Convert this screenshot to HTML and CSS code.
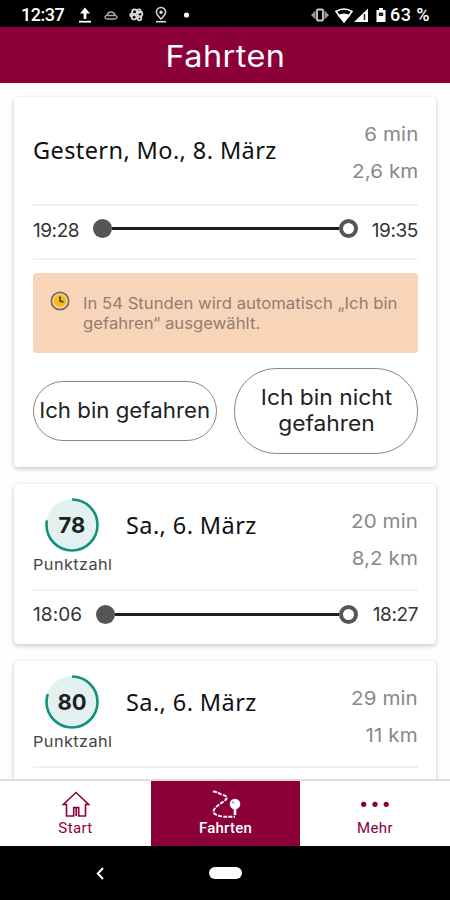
FILE: index.html
```html
<!DOCTYPE html>
<html lang="de">
<head>
<meta charset="utf-8">
<title>Fahrten</title>
<link rel="stylesheet" href="styles.css">
</head>
<body>
<div class="phone">
  <div class="status">
    <span class="clock">12:37</span>
    <svg class="status-left" width="118" height="20" viewBox="0 0 118 20" fill="none" stroke="#fff">
      <path d="M9 15V7" stroke-width="2.800"/><path d="M4 9.500 9 3.500l5 6z" fill="#fff" stroke="none"/><path d="M3 17.700h12" stroke-width="1.800"/>
      <path d="M29 12.500q0 2.500 3 2.500h6q3 0 3-2.500l-2-1.500q-1-3-4-3t-4 3zM31 11.500h8" stroke="#aaa" stroke-width="1.300"/>
      <g stroke="#ddd" stroke-width="1.700"><circle cx="58.500" cy="7.800" r="2.400"/><circle cx="64" cy="10" r="2.400"/><circle cx="58" cy="13" r="2.400"/><circle cx="63.500" cy="14.500" r="1.800"/><circle cx="55.500" cy="11" r="1.400"/><circle cx="63" cy="7" r="1.700"/></g>
      <path d="M85 15c-3-3-4.600-4.500-4.600-7a4.600 4.600 0 0 1 9.200 0c0 2.500-1.600 4-4.600 7z" stroke="#ddd" stroke-width="1.500"/><circle cx="85" cy="8.200" r="1.700" fill="#ddd" stroke="none"/><path d="M80 17.700h10" stroke="#ddd" stroke-width="1.600"/>
      <circle cx="110.500" cy="11" r="2.600" fill="#fff" stroke="none"/>
    </svg>
    <svg class="status-right" width="80" height="20" viewBox="0 0 80 20">
      <path d="M5.500 6.500v9L1 11zM14.500 6.500v9L19 11z" fill="#999"/><rect x="7" y="5.500" width="6" height="11" rx="1" fill="none" stroke="#ccc" stroke-width="1.800"/>
      <path d="M26 7.500q8-5 16 0L34 18z" fill="none" stroke="#fff" stroke-width="1.600"/><path d="M27.500 11.500q6.500-4 13 0L34 18z" fill="#fff"/>
      <path d="M44 18 58 4.500V18z" fill="#fff"/><path d="M54.500 10v6" stroke="#222" stroke-width="1.500"/>
      <path d="M66.500 6H69V4h4v2h2.500v12h-9z" fill="#fff"/><path d="M68.800 8.500h4.400v3.500h-4.400z" fill="#222"/>
    </svg>
    <span class="battery">63 %</span>
  </div>
  <header class="title"><span>Fahrten</span></header>
  <main class="trips">
    <section class="card first">
      <div class="summary">
        <h2 class="date wide">Gestern, Mo., 8. März</h2>
        <div class="stats"><span>6 min</span><span>2,6 km</span></div>
      </div>
      <div class="route">
        <span class="time">19:28</span>
        <div class="track"><i class="dot"></i><i class="line"></i><i class="ring"></i></div>
        <span class="time end">19:35</span>
      </div>
      <div class="notice">
        <svg width="20" height="20" viewBox="0 0 20 20"><circle cx="10" cy="10" r="8.700" fill="#f3cf9d" stroke="#7d6760" stroke-width="1.700"/><circle cx="10" cy="9.800" r="6" fill="#f6bd0c"/><path d="M10 5.500V10l3.500 1" fill="none" stroke="#5e4b26" stroke-width="1.900"/></svg>
        <p>In 54 Stunden wird automatisch „Ich bin<br>gefahren“ ausgewählt.</p>
      </div>
      <div class="actions">
        <button class="btn"><span>Ich bin gefahren</span></button>
        <button class="btn tall"><span>Ich bin nicht<br>gefahren</span></button>
      </div>
    </section>
    <section class="card">
      <div class="summary">
        <div class="score">
          <div class="gauge">
            <svg width="54" height="54" viewBox="0 0 54 54"><circle cx="27" cy="27" r="26" fill="#e3f1f0"/><circle cx="27" cy="27" r="25.500" fill="none" stroke="#13907f" stroke-width="2.600" pathLength="100" stroke-dasharray="78 22" transform="rotate(-90 27 27)"/></svg>
            <b>78</b>
          </div>
          <span class="label">Punktzahl</span>
        </div>
        <h2 class="date">Sa., 6. März</h2>
        <div class="stats"><span>20 min</span><span>8,2 km</span></div>
      </div>
      <div class="route">
        <span class="time loose">18:06</span>
        <div class="track"><i class="dot"></i><i class="line"></i><i class="ring"></i></div>
        <span class="time end">18:27</span>
      </div>
    </section>
    <section class="card">
      <div class="summary">
        <div class="score">
          <div class="gauge">
            <svg width="54" height="54" viewBox="0 0 54 54"><circle cx="27" cy="27" r="26" fill="#e3f1f0"/><circle cx="27" cy="27" r="25.500" fill="none" stroke="#13907f" stroke-width="2.600" pathLength="100" stroke-dasharray="80 20" transform="rotate(-90 27 27)"/></svg>
            <b>80</b>
          </div>
          <span class="label">Punktzahl</span>
        </div>
        <h2 class="date">Sa., 6. März</h2>
        <div class="stats"><span>29 min</span><span>11 km</span></div>
      </div>
      <div class="route"></div>
    </section>
  </main>
  <nav class="tabs">
    <a class="tab">
      <svg width="30" height="28" viewBox="0 0 30 28" fill="none" stroke="#8b0038" stroke-width="1.600"><path d="M5.500 14.500H2.300L15 2.500l12.700 12h-3.200V26h-6.800v-8.500h-5V26H5.500z"/><path d="M15.200 18v8"/></svg>
      <span>Start</span>
    </a>
    <a class="tab active">
      <svg width="30" height="28" viewBox="0 0 30 28" fill="none" stroke="#fff"><path d="M2 1.500c4 0 6 2 9 3 4 1.500 6 2 4 5-3 3-12 7-12.500 12 0 4 8 5 11 5.200H24" stroke-width="1.900" stroke-dasharray="4 1.200"/><circle cx="24" cy="14" r="5.300" fill="#fff" stroke="none"/><path d="M24 18v7" stroke-width="2.600"/><circle cx="22.200" cy="12.500" r="1" fill="#b56583" stroke="none"/></svg>
      <span>Fahrten</span>
    </a>
    <a class="tab">
      <svg width="30" height="28" viewBox="0 0 30 28" fill="#8b0020"><circle cx="3.700" cy="14.300" r="2.600"/><circle cx="15" cy="14.300" r="2.600"/><circle cx="26.200" cy="14.300" r="2.600"/></svg>
      <span>Mehr</span>
    </a>
  </nav>
  <div class="system">
    <svg width="8" height="13" viewBox="0 0 8 13"><path d="M7 1 1.800 6.500 7 12" fill="none" stroke="#fff" stroke-width="2"/></svg>
    <i class="pill"></i>
  </div>
</div>
</body>
</html>
```

FILE: styles.css
```css
* { box-sizing: border-box; }
body { margin: 0; background: #fff; font-family: Inter, sans-serif; }
.phone { width: 450px; height: 900px; display: flex; flex-direction: column; overflow: hidden; }

.status { flex: none; height: 27px; background: #000; color: #fff; display: flex; align-items: center; padding: 2px 20px 0 21px; font: 500 18px/24px Roboto, sans-serif; }
.status svg { margin-bottom: 1px; }
.clock { width: 55px; letter-spacing: -0.5px; white-space: nowrap; }
.status .status-right { margin-left: auto; }
.battery { width: 40px; white-space: nowrap; letter-spacing: 0.4px; }

.title { flex: none; height: 56px; background: #8b0038; color: #fff; font-size: 30px; line-height: 58px; text-align: center; letter-spacing: 0.4px; }
.title span { display: inline-block; transform: scaleX(1.08); }

.trips { flex: 1; min-height: 0; overflow: hidden; padding: 14px 14px 0; display: flex; flex-direction: column; gap: 17px; background: #fefefe; }
.card { flex: none; background: #fff; border-radius: 4px; padding: 0 18px 0 19px; box-shadow: 0 2px 5px rgba(0,0,0,.2), 0 0 2px rgba(0,0,0,.08); height: 160px; }
.card.first { height: 370px; }
.summary { height: 107px; display: flex; align-items: center; border-bottom: 2px solid #f0f0f0; }
.first .summary { height: 109px; }
.date { margin: 0; font: 400 23.5px/30px "Noto Sans", sans-serif; color: #111; letter-spacing: 0.4px; white-space: nowrap; padding-bottom: 23px; }
.date.wide { padding-bottom: 1px; }
.stats { margin-left: auto; padding-top: 6px; display: flex; flex-direction: column; text-align: right; font-size: 19px; line-height: 37px; color: #888; letter-spacing: 0.1px; white-space: nowrap; transform: scaleX(1.08); transform-origin: right; }
.first .stats { padding-top: 4px; }

.score { width: 93px; align-self: flex-start; padding-top: 14px; }
.gauge { display: grid; width: 54px; height: 54px; margin-left: 12px; }
.gauge svg, .gauge b { grid-area: 1 / 1; }
.gauge b { place-self: center; font-size: 22px; font-weight: 700; color: #1e2222; }
.label { display: block; font-size: 15px; line-height: 18px; margin-top: 4px; letter-spacing: 0.4px; color: #444; transform: scaleX(1.085); transform-origin: left; }

.route { height: 47px; display: flex; align-items: center; font-size: 19px; color: #333; }
.first .route { height: 54px; padding-bottom: 4px; border-bottom: 2px solid #f3f3f3; }
.time { letter-spacing: -0.45px; white-space: nowrap; }
.time.loose { letter-spacing: 0.1px; }
.time.end { width: 47px; text-align: right; letter-spacing: -0.4px; }
.track { flex: 1; display: flex; align-items: center; margin: 0 13px 0 14px; }
.first .track { margin-bottom: 3px; }
.dot, .ring { width: 19px; height: 19px; border-radius: 50%; }
.dot { background: #555; }
.ring { border: 4.5px solid #555; }
.line { flex: 1; height: 3px; background: #1d1d1d; }

.notice { height: 80px; margin-top: 13px; background: #f8d5b8; border-radius: 4px; display: flex; padding: 18px 17px; }
.notice svg { flex: none; }
.notice p { margin: 2px 0 0 13px; font-size: 16px; line-height: 20px; color: #967c6d; white-space: nowrap; transform: scaleX(1.043); transform-origin: left; }

.actions { display: flex; align-items: center; justify-content: space-between; margin-top: 15px; height: 86px; }
.btn { width: 184px; height: 60px; padding: 0; border: 1px solid #888; border-radius: 30px; background: #fff; color: #222; font: 400 21px/26px Inter, sans-serif; white-space: nowrap; }
.btn span { display: inline-block; transform: scaleX(1.06); }
.btn.tall { height: 86px; border-radius: 42px; }
.btn.tall span { transform: scaleX(1.085); }

.tabs { flex: none; height: 67px; display: grid; grid-template-columns: 151px 149px 150px; border-top: 2px solid #edd8e1; background: #fff; }
.tab { display: flex; flex-direction: column; align-items: center; padding-top: 9px; color: #8b0038; font: 400 15px/18px Roboto, sans-serif; }
.tab.active { background: #8b0038; color: #fff; font-weight: 500; }
.tab span { margin-top: 1px; letter-spacing: 0.4px; }
.tab.active span { letter-spacing: 0.2px; }

.system { flex: none; height: 54px; background: #000; display: flex; align-items: center; padding: 0 0 0 96px; }
.pill { width: 33px; height: 12px; border-radius: 6px; background: #fff; margin-left: 105px; }
```
